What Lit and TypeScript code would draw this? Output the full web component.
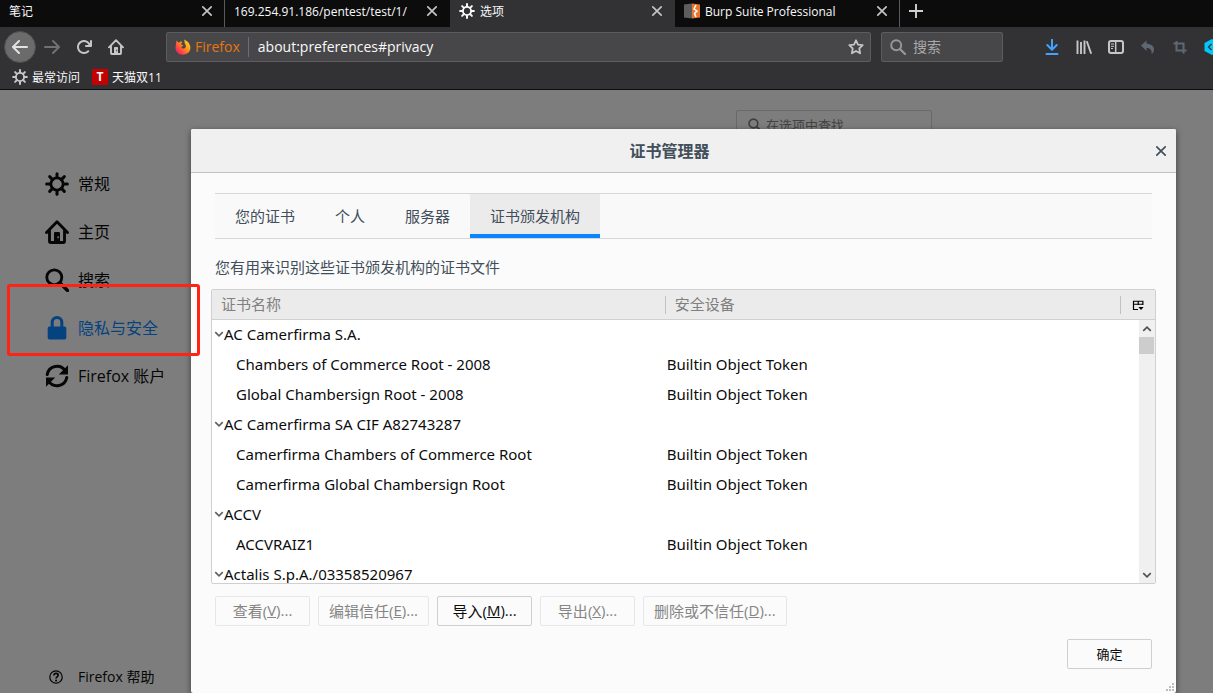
import { LitElement, html, svg, css, nothing } from "lit";
import { customElement, state } from "lit/decorators.js";
import { classMap } from "lit/directives/class-map.js";

const gearSpokes = [0, 45, 90, 135, 180, 225, 270, 315];

const icons: Record<string, unknown> = {
  close: svg`<path d="M3.8 3.800l8.400 8.400M12.200 3.800l-8.400 8.400" fill="none" stroke="currentColor" stroke-width="1.700" stroke-linecap="round"/>`,
  plus: svg`<path d="M8 1v14M1 8h14" fill="none" stroke="currentColor" stroke-width="1.9"/>`,
  back: svg`<path fill="currentColor" d="M15 7H3.414l4.293-4.293a1 1 0 0 0-1.414-1.414l-6 6a1 1 0 0 0 0 1.414l6 6a1 1 0 0 0 1.414-1.414L3.414 9H15a1 1 0 0 0 0-2z"/>`,
  forward: svg`<path fill="currentColor" d="M1 7h11.586L8.293 2.707a1 1 0 0 1 1.414-1.414l6 6a1 1 0 0 1 0 1.414l-6 6a1 1 0 0 1-1.414-1.414L12.586 9H1a1 1 0 0 1 0-2z"/>`,
  reload: svg`<path fill="currentColor" d="M15 1a1 1 0 0 0-1 1v2.418A6.995 6.995 0 1 0 8 15a6.954 6.954 0 0 0 4.95-2.05 1 1 0 0 0-1.414-1.414A5.019 5.019 0 1 1 12.549 6H10a1 1 0 0 0 0 2h5a1 1 0 0 0 1-1V2a1 1 0 0 0-1-1z"/>`,
  home: svg`<path fill="none" stroke="currentColor" stroke-width="1.9" stroke-linecap="round" stroke-linejoin="round" d="M1 8.3L8 1.2l7 7.1M3 7v7.2a.8.8 0 0 0 .8.8h8.4a.8.8 0 0 0 .8-.8V7"/><path fill="currentColor" fill-rule="evenodd" d="M6.8 8h2.4a.8.8 0 0 1 .8.8V15H6V8.800a.8.8 0 0 1 .8-.8zM8.300 10.800h.9v1.400h-.9z"/>`,
  gear: svg`<circle cx="8" cy="8" r="4.1" fill="none" stroke="currentColor" stroke-width="1.9"/>${gearSpokes.map(
    (a) => svg`<path d="M8 3.600V1.100" stroke="currentColor" stroke-width="2" stroke-linecap="round" transform="rotate(${a} 8 8)"/>`
  )}`,
  star: svg`<path fill="none" stroke="currentColor" stroke-width="1.800" stroke-linejoin="round" d="M8 1.300l2 4.300 4.700.6-3.400 3.200.8 4.900L8 12l-4.100 2.300.8-4.900L1.300 6.200 6 5.600z"/>`,
  search: svg`<circle cx="6.200" cy="6.200" r="5" fill="none" stroke="currentColor" stroke-width="1.900"/><path d="M10 10l5 5" stroke="currentColor" stroke-width="2.200" stroke-linecap="round"/>`,
  download: svg`<path fill="none" stroke="currentColor" stroke-width="2" stroke-linecap="round" stroke-linejoin="round" d="M8 .8v9.400M3.300 6L8 10.700 12.700 6M2.500 15h11"/>`,
  library: svg`<path fill="none" stroke="currentColor" stroke-width="1.900" d="M1.500 1.500v13.500M5 3v12M8.500 1.500v13.500M10.800 2.200l4.400 12.600"/>`,
  sidebar: svg`<rect x="1" y="2" width="14" height="12" rx="2" fill="none" stroke="currentColor" stroke-width="2"/><path d="M7.700 2.500v11" stroke="currentColor" stroke-width="1.500"/><path d="M3 5h3M3 7.300h3M3 9.500h2" stroke="currentColor"/>`,
  undo: svg`<path fill="currentColor" d="M1 6.500L6.500 1.500v3.200c4.500 0 7.500 2.300 7.500 5.700 0 2-1 3.500-2.500 4.600.6-3.600-.8-6-5-6v3z"/>`,
  crop: svg`<path fill="none" stroke="currentColor" stroke-width="2.100" d="M4.500 2v9.500H14.500M1.500 4.500H11.500V14.500"/>`,
  lock: svg`<path fill="currentColor" d="M3 7h10a1.200 1.200 0 0 1 1.200 1.200v6.300a1.200 1.200 0 0 1-1.200 1.200H3a1.200 1.200 0 0 1-1.200-1.200V8.200A1.200 1.200 0 0 1 3 7z"/><path fill="none" stroke="currentColor" stroke-width="2" d="M4.800 8V4.200a3.200 3.200 0 0 1 6.400 0V8"/>`,
  sync: svg`<path fill="none" stroke="currentColor" stroke-width="2" stroke-linecap="round" d="M1.500 7A6.600 6.600 0 0 1 13.500 4.500M14.500 9A6.600 6.600 0 0 1 2.500 11.500"/><path fill="currentColor" d="M15.300.800v6.200H9.200zM.7 15.200V9h6.100z"/>`,
  help: svg`<circle cx="8" cy="8" r="7.100" fill="none" stroke="currentColor" stroke-width="1.400"/><path fill="none" stroke="currentColor" stroke-width="1.900" d="M5.600 6.300c0-3.300 4.900-3 4.900-.2 0 1.700-2.400 1.700-2.400 3.600"/><circle cx="8.100" cy="12" r="1.200" fill="currentColor"/>`,
  down: svg`<path fill="none" stroke="currentColor" stroke-width="2.600" d="M2 5l6 6 6-6"/>`,
  up: svg`<path fill="none" stroke="currentColor" stroke-width="2.600" d="M2 11l6-6 6 6"/>`,
  picker: svg`<path fill="none" stroke="currentColor" stroke-width="1.600" d="M8 14H2V3h12.500V8M2 7h12.500M8.300 3v5"/><path fill="currentColor" d="M8.500 10.500h7L12 14.500z"/>`,
  burp: svg`<path fill="#5d5d5d" d="M0 1.500L8 .5v15l-8-1z"/><path fill="#e8762d" d="M8 .5l8 1v13l-8 1z"/><path fill="none" stroke="#fff" stroke-width="1.500" d="M12 2L10 6l3 2-2.500 2.500L12 14"/>`,
  firefox: svg`<defs><linearGradient id="fx" x1="1" y1="0" x2="0" y2="1"><stop offset="0" stop-color="#ffe226"/><stop offset=".4" stop-color="#ff9a14"/><stop offset=".75" stop-color="#ff3750"/><stop offset="1" stop-color="#e31587"/></linearGradient></defs><path fill="url(#fx)" d="M1.500 1.500l1.800 2 2-.3L6 1.800l1.200 2c-1.400.5-1.500 1.500-.3 2l1.500.4c-.5 1.300-2 1-2 2 .3 1.800 3.500 2 4.300-.3.500-1.800-.5-2.800-1-3.400l-.4-4L12 2.200l1.700 1.600 1.200 2.400c1.800 5.200-2 9.500-6.700 9.500C3.200 15.700.4 12 .5 8.500z"/>`,
  hex: svg`<path fill="#00c8fa" d="M8 0l7.500 4v8L8 16 .5 12V4z"/><path fill="none" stroke="#333a40" stroke-width="1.400" d="M7.500 5L4.500 8l3 3"/>`,
};

const icon = (name: string, cls = "i16") =>
  html`<svg class=${cls} viewBox="0 0 16 16" aria-hidden="true">${icons[name]}</svg>`;

const certs: { name: string; device?: string }[] = [
  { name: "AC Camerfirma S.A." },
  { name: "Chambers of Commerce Root - 2008", device: "Builtin Object Token" },
  { name: "Global Chambersign Root - 2008", device: "Builtin Object Token" },
  { name: "AC Camerfirma SA CIF A82743287" },
  { name: "Camerfirma Chambers of Commerce Root", device: "Builtin Object Token" },
  { name: "Camerfirma Global Chambersign Root", device: "Builtin Object Token" },
  { name: "ACCV" },
  { name: "ACCVRAIZ1", device: "Builtin Object Token" },
  { name: "Actalis S.p.A./03358520967" },
];

const base = css`
  :host {
    font-family: "Open Sans", "Noto Sans CJK SC", sans-serif;
  }
  * {
    box-sizing: border-box;
  }
  button,
  input {
    font: inherit;
    color: inherit;
    margin: 0;
    padding: 0;
    border: 0;
    background: none;
  }
  button {
    display: flex;
    align-items: center;
    justify-content: center;
    white-space: nowrap;
  }
  input {
    min-width: 0;
    flex: 1;
    outline: 0;
  }
  a {
    color: inherit;
    text-decoration: none;
  }
  svg {
    display: block;
    flex: none;
  }
  .i16 {
    width: 16px;
    height: 16px;
  }
  .i24 {
    width: 24px;
    height: 24px;
  }
  .i14 {
    width: 14px;
    height: 14px;
  }
  .i12 {
    width: 12px;
    height: 12px;
  }
  .i10 {
    width: 10px;
    height: 10px;
  }
`;

@customElement("browser-chrome")
export class BrowserChrome extends LitElement {
  static styles = [
    base,
    css`
      :host {
        display: block;
        overflow: hidden;
        background: #323234;
        color: #f9f9fa;
        border-bottom: 1px solid #0c0c0d;
        font-size: 12px;
      }
      .tabs {
        display: flex;
        height: 27px;
        background: #0c0c0d;
      }
      .tab {
        display: flex;
        flex: 0 1 225px;
        align-items: center;
        gap: 5px;
        padding: 0 9px 5px;
        border-right: 1px solid #0c0c0d;
        white-space: nowrap;
      }
      .tab.line {
        border-right-color: #5a5a5c;
      }
      .tab.active {
        background: #323234;
        border-right-color: #323234;
      }
      .title {
        flex: 1;
        overflow: hidden;
      }
      .tab button {
        color: #c4c4c5;
      }
      .new {
        width: 32px;
        padding-bottom: 6px;
        color: #d0d0d1;
      }
      .nav {
        display: flex;
        align-items: center;
        height: 40px;
        margin-right: -15px;
        padding-left: 4px;
        color: #c6c6c7;
        font-size: 14px;
      }
      .tool {
        width: 32px;
        height: 32px;
        flex: none;
      }
      .round {
        border-radius: 50%;
        background: #6b6b6c;
        color: #e2e2e2;
        border: 1px solid #4d4d4f;
      }
      .dim {
        color: #717173;
      }
      .muted {
        color: #5d6873;
      }
      .blue {
        color: #45a1ff;
      }
      .box {
        display: flex;
        align-items: center;
        height: 30px;
        background: #474749;
        border: 1px solid #5c5c5e;
        border-radius: 2px;
      }
      .box input {
        height: 28px;
        padding-bottom: 2px;
      }
      .url {
        flex: 1;
        margin: 0 10px 0 34px;
        padding: 0 6px 0 8px;
        color: #f9f9fa;
      }
      .brand {
        display: flex;
        align-items: center;
        gap: 4px;
        padding-right: 8px;
        margin-right: 9px;
        border-right: 1px solid #66707c;
        line-height: 20px;
        color: #e87410;
      }
      .star {
        color: #c6c6c7;
      }
      .search {
        width: 122px;
        margin-right: 33px;
        padding-left: 8px;
        gap: 7px;
        color: #98989a;
      }
      ::placeholder {
        color: #a9a9ab;
        opacity: 1;
      }
      .marks {
        display: flex;
        align-items: center;
        gap: 12px;
        height: 22px;
        padding: 0 0 3px 12px;
      }
      .marks a {
        display: flex;
        align-items: center;
        gap: 4px;
      }
      .marks svg {
        color: #c6c6c7;
      }
      .tmall {
        display: grid;
        place-items: center;
        width: 16px;
        height: 16px;
        border-radius: 1px;
        background: #c40000;
        font-weight: 700;
        line-height: 16px;
      }
    `,
  ];

  render() {
    const tabs = [
      { title: "笔记", line: true },
      { title: "169.254.91.186/pentest/test/1/" },
      { title: "选项", icon: "gear", active: true },
      { title: "Burp Suite Professional", icon: "burp", line: true },
    ];
    const tool = (name: string, label: string, cls = "") =>
      html`<button class="tool ${cls}" aria-label=${label}>${icon(name)}</button>`;
    return html`
      <div class="tabs">
        ${tabs.map(
          (t) => html`<div class=${classMap({ tab: true, line: !!t.line, active: !!t.active })}>
            ${t.icon ? icon(t.icon) : nothing}<span class="title">${t.title}</span>
            <button aria-label="关闭标签页">${icon("close")}</button>
          </div>`
        )}
        <button class="new" aria-label="新建标签页">${icon("plus")}</button>
      </div>
      <div class="nav">
        ${tool("back", "后退", "round")}${tool("forward", "前进", "dim")}${tool("reload", "刷新")}${tool("home", "主页")}
        <div class="box url">
          <span class="brand">${icon("firefox")}Firefox</span>
          <input aria-label="地址" .value=${"about:preferences#privacy"} />
          <button class="star" aria-label="收藏">${icon("star")}</button>
        </div>
        <div class="box search">${icon("search")}<input aria-label="搜索" placeholder="搜索" /></div>
        ${tool("download", "下载", "blue")}${tool("library", "书库")}${tool("sidebar", "侧栏")}
        ${tool("undo", "撤销", "muted")}${tool("crop", "截图", "muted")}${tool("hex", "扩展")}
      </div>
      <div class="marks">
        <a href="#most">${icon("gear")}最常访问</a>
        <a href="#tmall"><span class="tmall">T</span>天猫双11</a>
      </div>
    `;
  }
}

@customElement("cert-manager")
export class CertManager extends LitElement {
  @state() private tab = 3;

  static styles = [
    base,
    css`
      :host {
        display: flex;
        flex-direction: column;
        background: #fbfbfb;
        border-radius: 2px;
        box-shadow: 0 2px 6px rgba(0, 0, 0, 0.5);
        color: #424e5a;
        font-size: 15px;
        overflow: hidden;
      }
      .head {
        display: grid;
        grid-template-columns: 1fr 28px;
        align-items: center;
        height: 44px;
        background: #f0f0f0;
        border-bottom: 1px solid #c1c1c1;
      }
      .head button {
        justify-content: flex-start;
        padding-left: 5px;
      }
      h1 {
        margin: 0;
        padding-bottom: 2px;
        font-size: 16px;
        font-weight: 700;
        text-align: center;
      }
      .body {
        display: flex;
        flex: 1;
        flex-direction: column;
        min-height: 0;
        padding: 20px 24px 24px;
      }
      .tabs {
        display: flex;
        flex: none;
        height: 46px;
        background: #f9f9f9;
        border: solid #d7d7d7;
        border-width: 1px 0;
      }
      .tabs button {
        padding: 2px 20px 0;
        border-bottom: 4px solid transparent;
      }
      .tabs .on {
        background: #ebebeb;
        border-bottom-color: #0a84ff;
      }
      p {
        margin: 17px 0 11px;
        line-height: 22px;
      }
      .tree {
        position: relative;
        flex: 1;
        min-height: 0;
        margin: 0 -4px;
        overflow: hidden;
        background: #fff;
        border: 1px solid #d0d0d0;
        border-radius: 2px;
      }
      table {
        width: 100%;
        table-layout: fixed;
        border-collapse: separate;
        border-spacing: 0;
      }
      .c1 {
        width: 48%;
      }
      .c3 {
        width: 35px;
      }
      th {
        height: 30px;
        padding: 0;
        background: #ebebeb;
        border-bottom: 1px solid #d0d0d0;
        color: #808080;
        font-weight: 400;
        line-height: 16px;
        text-align: left;
      }
      .cap {
        display: flex;
        align-items: center;
        height: 18px;
        padding: 0 0 2px 9px;
      }
      .sep {
        border-left: 1px solid #c1c1c1;
      }
      .pick {
        width: 100%;
        height: 18px;
        color: #000;
      }
      td {
        height: 30px;
        padding: 0 0 2px 2px;
        font-family: "Noto Sans", "Noto Sans CJK SC", sans-serif;
        line-height: 20px;
        color: #0c0c0d;
        white-space: nowrap;
      }
      .child {
        padding-left: 24px;
      }
      .group {
        display: flex;
        align-items: center;
      }
      .group svg {
        color: #606060;
      }
      .bar {
        position: absolute;
        top: 30px;
        right: 0;
        bottom: 0;
        display: flex;
        flex-direction: column;
        align-items: stretch;
        justify-content: space-between;
        width: 16px;
        background: #f0f0f0;
        color: #505050;
      }
      .bar button {
        height: 17px;
      }
      .thumb {
        height: 17px;
        margin: 0 1px 0 0;
        background: #cdcdcd;
      }
      .rest {
        flex: 1;
      }
      .actions {
        display: flex;
        flex: none;
        gap: 8px;
        margin-top: 12px;
      }
      .btn {
        min-width: 95px;
        height: 30px;
        padding: 0 10px 2px;
        background: #fbfbfb;
        border: 1px solid #cfcfd0;
        border-radius: 2px;
        color: #0c0c0d;
      }
      .btn:disabled {
        color: #858586;
        border-color: #e7e7e8;
      }
      .foot {
        display: flex;
        flex: none;
        justify-content: flex-end;
        margin-top: 13px;
        font-size: 13px;
      }
      .ok {
        min-width: 85px;
      }
      .grip {
        position: absolute;
        right: 2px;
        bottom: 2px;
        width: 8px;
        height: 8px;
        fill: #bdbdbd;
      }
    `,
  ];

  render() {
    const tabs = ["您的证书", "个人", "服务器", "证书颁发机构"];
    const actions = [
      { text: "查看", key: "V" },
      { text: "编辑信任", key: "E" },
      { text: "导入", key: "M", on: true },
      { text: "导出", key: "X" },
      { text: "删除或不信任", key: "D" },
    ];
    return html`
      <div class="head"><h1>证书管理器</h1><button aria-label="关闭">${icon("close")}</button></div>
      <div class="body">
        <div class="tabs" role="tablist">
          ${tabs.map(
            (t, i) => html`<button role="tab" aria-selected=${i === this.tab} class=${classMap({ on: i === this.tab })} @click=${() => (this.tab = i)}>${t}</button>`
          )}
        </div>
        <p>您有用来识别这些证书颁发机构的证书文件</p>
        <div class="tree">
          <table>
            <colgroup><col class="c1" /><col /><col class="c3" /></colgroup>
            <thead>
              <tr>
                <th><div class="cap">证书名称</div></th>
                <th><div class="cap sep">安全设备</div></th>
                <th><button class="pick sep" aria-label="选择列">${icon("picker", "i12")}</button></th>
              </tr>
            </thead>
            <tbody>
              ${certs.map(
                (c) => html`<tr>
                  ${c.device
                    ? html`<td class="child">${c.name}</td><td>${c.device}</td>`
                    : html`<td colspan="2"><span class="group">${icon("down", "i10")}${c.name}</span></td>`}
                </tr>`
              )}
            </tbody>
          </table>
          <div class="bar">
            <button aria-label="向上滚动">${icon("up", "i10")}</button>
            <div class="thumb"></div>
            <div class="rest"></div>
            <button aria-label="向下滚动">${icon("down", "i10")}</button>
          </div>
        </div>
        <div class="actions">
          ${actions.map((a) => html`<button class="btn" ?disabled=${!a.on}>${a.text}(<u>${a.key}</u>)...</button>`)}
        </div>
        <div class="foot"><button class="btn ok">确定</button></div>
      </div>
      <svg class="grip" viewBox="0 0 8 8" aria-hidden="true">
        <path d="M6 0h2v2H6zM3 3h2v2H3zM6 3h2v2H6zM0 6h2v2H0zM3 6h2v2H3zM6 6h2v2H6z" />
      </svg>
    `;
  }
}

@customElement("app-root")
export class AppRoot extends LitElement {
  static styles = [
    base,
    css`
      :host {
        position: relative;
        display: flex;
        flex-direction: column;
        height: 100vh;
        overflow: hidden;
        background: #7d7d7d;
      }
      main {
        position: relative;
        display: flex;
        flex: 1;
        align-items: stretch;
        min-height: 0;
      }
      nav {
        display: flex;
        flex-direction: column;
        width: 240px;
        padding: 70px 0 0 45px;
        color: #060606;
        font-size: 16px;
      }
      nav a {
        display: flex;
        align-items: center;
        gap: 9px;
        height: 48px;
      }
      nav span {
        padding-bottom: 2px;
      }
      nav .sel {
        color: #054280;
      }
      nav .help {
        gap: 15px;
        height: 32px;
        margin-top: auto;
        padding-left: 4px;
        font-size: 14px;
      }
      .content {
        display: flex;
        flex: 1;
        justify-content: flex-end;
        align-items: flex-start;
        padding: 20px 281px 0 0;
      }
      .find {
        display: flex;
        align-items: center;
        gap: 4px;
        width: 196px;
        height: 30px;
        padding-left: 11px;
        border: 1px solid #696969;
        border-radius: 2px;
        color: #404040;
        font-size: 13px;
      }
      ::placeholder {
        color: #434343;
        opacity: 1;
      }
      cert-manager {
        position: absolute;
        inset: 39px 37px 0 191px;
      }
      .mark {
        position: absolute;
        top: 194px;
        left: 7px;
        width: 193px;
        height: 72px;
        border: 3px solid #ff2215;
        border-radius: 3px;
      }
    `,
  ];

  render() {
    const items = [
      ["gear", "常规"],
      ["home", "主页"],
      ["search", "搜索"],
      ["lock", "隐私与安全"],
      ["sync", "Firefox 账户"],
    ];
    return html`
      <browser-chrome></browser-chrome>
      <main>
        <nav>
          ${items.map(
            ([i, t]) => html`<a href="#${i}" class=${classMap({ sel: i === "lock" })}>${icon(i, "i24")}<span>${t}</span></a>`
          )}
          <a href="#help" class="help">${icon("help", "i14")}<span>Firefox 帮助</span></a>
        </nav>
        <div class="content">
          <div class="find">${icon("search", "i14")}<input aria-label="在选项中查找" placeholder="在选项中查找" /></div>
        </div>
        <cert-manager></cert-manager>
        <div class="mark"></div>
      </main>
    `;
  }
}
